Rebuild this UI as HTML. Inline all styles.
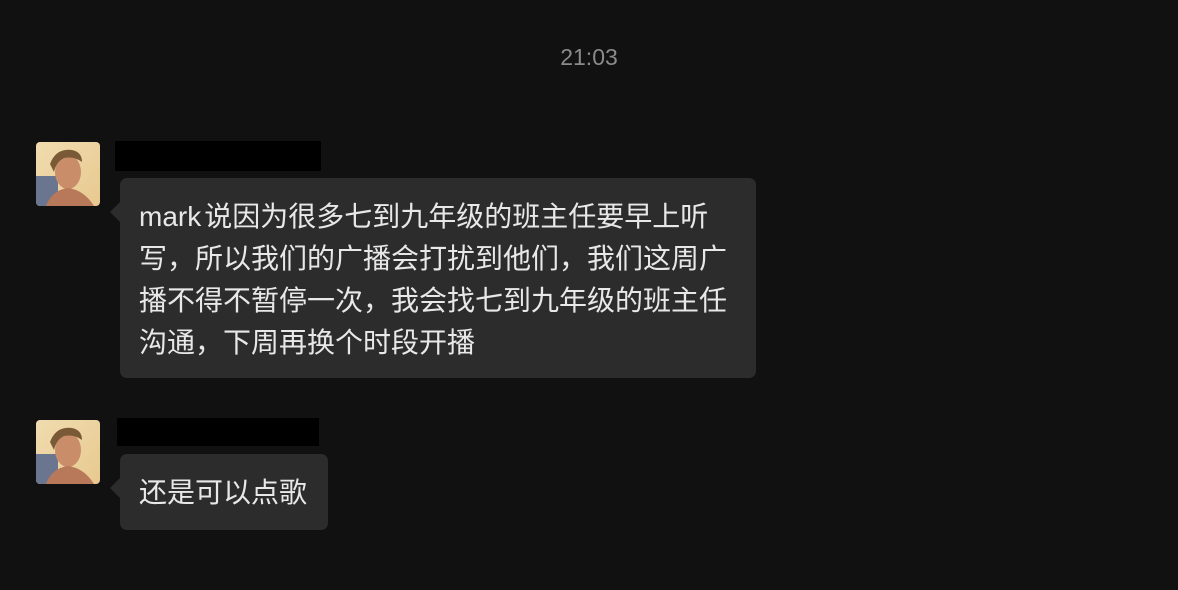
<!DOCTYPE html>
<html><head><meta charset="utf-8"><style>
body{margin:0;width:1178px;height:590px;background:#111111;position:relative;overflow:hidden;font-family:"Liberation Sans","Noto Sans CJK SC",sans-serif;}
.time{position:absolute;left:0;width:1178px;top:44px;text-align:center;color:#8a8a8a;font-size:23px;}
.av{position:absolute;left:36px;width:64px;height:64px;border-radius:4px;overflow:hidden;background:linear-gradient(135deg,#f0dcb0,#e8c98f);}
.bar{position:absolute;background:#000;}
.bub{position:absolute;left:120px;background:#2c2c2c;border-radius:7px;color:#e8e8e8;font-size:28px;line-height:42px;padding:18px 19px 0 19px;box-sizing:border-box;}
.bub:before{content:"";position:absolute;left:-10px;top:24px;border:10px solid transparent;border-left:0;border-right-color:#2c2c2c;}
</style></head><body>
<div class="time">21:03</div>
<div class="av" style="top:142px"><svg width="64" height="64"><rect x="0" y="34" width="22" height="30" fill="#6a7690"/><ellipse cx="32" cy="30" rx="13" ry="17" fill="#c98d6a"/><path d="M14 22 Q20 6 36 8 Q46 10 46 20 Q38 14 28 16 Q20 20 18 30Z" fill="#7a5a36"/><path d="M10 64 Q16 48 32 46 Q48 48 58 64Z" fill="#b8795a"/></svg></div>
<div class="bar" style="left:115px;top:141px;width:206px;height:30px"></div>
<div class="bub" style="top:178px;width:636px;height:200px"><span style="margin-right:3px">mark</span>说因为很多七到九年级的班主任要早上听写，所以我们的广播会打扰到他们，我们这周广播不得不暂停一次，我会找七到九年级的班主任沟通，下周再换个时段开播</div>
<div class="av" style="top:420px"><svg width="64" height="64"><rect x="0" y="34" width="22" height="30" fill="#6a7690"/><ellipse cx="32" cy="30" rx="13" ry="17" fill="#c98d6a"/><path d="M14 22 Q20 6 36 8 Q46 10 46 20 Q38 14 28 16 Q20 20 18 30Z" fill="#7a5a36"/><path d="M10 64 Q16 48 32 46 Q48 48 58 64Z" fill="#b8795a"/></svg></div>
<div class="bar" style="left:117px;top:418px;width:202px;height:28px"></div>
<div class="bub" style="top:454px;width:208px;height:76px;padding-top:18px">还是可以点歌</div>
</body></html>
